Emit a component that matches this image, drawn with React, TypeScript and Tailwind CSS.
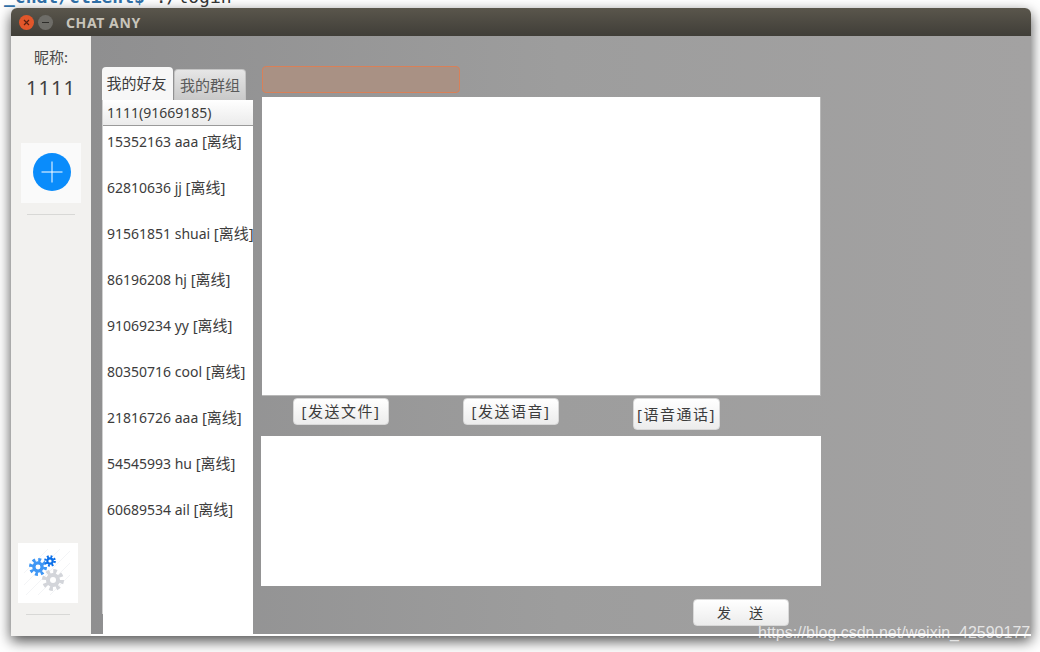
const friends = [
  ["15352163", "aaa"],
  ["62810636", "jj"],
  ["91561851", "shuai"],
  ["86196208", "hj"],
  ["91069234", "yy"],
  ["80350716", "cool"],
  ["21816726", "aaa"],
  ["54545993", "hu"],
  ["60689534", "ail"],
];

const font = "font-['Noto_Sans','Noto_Sans_CJK_SC',sans-serif]";

function Gear({ cx, cy, r, color, hole }: { cx: number; cy: number; r: number; color: string; hole: string }) {
  const teethR = r * 0.92;
  const circ = 2 * Math.PI * teethR;
  const dash = circ / 16;
  return (
    <g>
      <circle cx={cx} cy={cy} r={teethR} fill="none" stroke={color} strokeWidth={r * 0.5} strokeDasharray={`${dash} ${dash}`} />
      <circle cx={cx} cy={cy} r={r * 0.75} fill={color} />
      <circle cx={cx} cy={cy} r={r * 0.32} fill={hole} />
    </g>
  );
}

function ActionButton({ label, className }: { label: string; className: string }) {
  return (
    <div
      className={`flex items-center justify-center rounded-[4px] border border-[#d8d8d8] bg-gradient-to-b from-white to-[#ececec] text-[#3c3c3c] ${className}`}
    >
      {label}
    </div>
  );
}

export default function App() {
  return (
    <div className={`relative h-[652px] w-[1040px] overflow-hidden bg-white ${font}`}>
      <div className="h-[8px] overflow-hidden pl-[4px]">
        <div className="-mt-[13px] whitespace-pre font-['DejaVu_Sans_Mono',monospace] text-[18px] font-bold leading-[20px] text-[#2f6ea5]">
          _chat/client$<span className="font-normal text-[#333]"> ./login</span>
        </div>
      </div>

      <div className="ml-[11px] flex h-[628px] w-[1020px] flex-col overflow-hidden rounded-t-[6px] shadow-[0_5px_14px_rgba(0,0,0,0.7)]">
        <div className="flex h-[28px] shrink-0 items-center bg-gradient-to-b from-[#5a564c] to-[#403e38] pl-[8px]">
          <div className="flex h-[15px] w-[15px] items-center justify-center rounded-full bg-[#e2562a]">
            <svg width="7" height="7" viewBox="0 0 7 7">
              <path d="M1 1L6 6M6 1L1 6" stroke="#5a2010" strokeWidth="1.2" />
            </svg>
          </div>
          <div className="ml-[4px] flex h-[15px] w-[15px] items-center justify-center rounded-full bg-[#6e6d68]">
            <div className="h-px w-[7px] bg-[#2e2d2a]" />
          </div>
          <div className="ml-[13px] text-[14px] font-bold tracking-[0.6px] text-[#c8c4ba]">CHAT ANY</div>
        </div>

        <div className="flex h-[600px] border-b-2 border-white">
          <div className="-mb-[2px] flex w-[80px] shrink-0 flex-col items-center bg-[#f2f1ef]">
            <div className="mt-[11px] text-[15px] leading-[20px] text-[#4a4a4a]">昵称:</div>
            <div className="mt-[9px] text-[20px] leading-[24px] tracking-[1px] text-[#3f3f3f]">1111</div>
            <div className="mt-[43px] flex h-[60px] w-[60px] items-center justify-center bg-[#fafafa]">
              <svg width="38" height="38" viewBox="0 0 38 38" className="-mt-[2px] ml-[1px]">
                <circle cx="19" cy="19" r="19" fill="#0a8cfb" />
                <path d="M19 8.5V29.5M8.5 19H29.5" stroke="#fff" strokeWidth="1" />
              </svg>
            </div>
            <div className="mt-[11px] h-px w-[48px] bg-[#d8d8d6]" />
            <div className="flex-1" />
            <div className="-ml-[6px] flex h-[60px] w-[60px] items-center justify-center bg-white">
              <svg width="60" height="60" viewBox="0 0 60 60">
                <path d="M6 30L30 6M6 42L42 6M8 52L52 8M20 52L52 20M32 52L52 32" stroke="#f3f4f6" strokeWidth="1" fill="none" />
                <Gear cx={20} cy={24} r={7.7} color="#3f97f5" hole="#fff" />
                <Gear cx={32} cy={18} r={5} color="#0b6fe8" hole="#fff" />
                <Gear cx={35} cy={37} r={9.4} color="#d3d5da" hole="#fff" />
              </svg>
            </div>
            <div className="-ml-[6px] mb-[21px] mt-[11px] h-px w-[44px] bg-[#d8d8d6]" />
          </div>

          <div className="flex min-w-0 flex-1 bg-gradient-to-r from-[#8f8f90] via-[#9d9d9d] to-[#a3a2a2] pl-[11px]">
            <div className="mt-[31px] flex w-[151px] shrink-0 flex-col">
              <div className="flex h-[33px] shrink-0 items-end gap-px text-[15px]">
                <div className="flex h-[33px] w-[71px] items-center justify-center rounded-t-[4px] bg-[#f7f7f7] pr-[2px] text-[#3c3c3c]">
                  我的好友
                </div>
                <div className="flex h-[31px] w-[72px] items-center justify-center rounded-t-[4px] border border-b-0 border-[#c4c4c4] bg-gradient-to-b from-[#e6e6e6] to-[#c9c9c9] text-[#5a5a5a]">
                  我的群组
                </div>
              </div>
              <div className="flex min-h-0 flex-1">
                <div className="mb-[20px] w-px bg-[#d0d0d0]" />
                <div className="flex min-w-0 flex-1 flex-col bg-white">
                  <div className="flex h-[26px] shrink-0 items-center border-b border-[#9a9a9a] bg-gradient-to-b from-white to-[#ebebeb] pl-[4px] text-[14px] text-[#3c3c3c]">
                    1111(91669185)
                  </div>
                  {friends.map(([id, name]) => (
                    <div
                      key={id}
                      className="h-[46px] shrink-0 whitespace-nowrap pl-[4px] pt-[5px] text-[14px] leading-[20px] text-[#3c3c3c]"
                    >
                      {id} {name} <span className="text-[15px]">[离线]</span>
                    </div>
                  ))}
                </div>
              </div>
            </div>

            <div className="ml-[8px] flex w-[560px] shrink-0 flex-col">
              <div className="ml-[1px] mt-[30px] h-[27px] w-[198px] rounded-[4px] border border-[#d98058] bg-[#a99184]" />
              <div className="ml-[1px] mt-[4px] h-[299px] w-[559px] border-b border-r border-[#b8b8b8] bg-white" />
              <div className="mt-[2px] flex h-[38px] items-start text-[15px] tracking-[1.5px]">
                <ActionButton label="[发送文件]" className="ml-[32px] h-[27px] w-[96px]" />
                <ActionButton label="[发送语音]" className="ml-[74px] h-[27px] w-[96px]" />
                <ActionButton label="[语音通话]" className="ml-[74px] h-[32px] w-[87px]" />
              </div>
              <div className="h-[150px] w-[560px] bg-white" />
              <ActionButton label="发　送" className="ml-[432px] mt-[13px] h-[27px] w-[96px] text-[14px] tracking-[2px]" />
            </div>
          </div>
        </div>
      </div>

      <div className="absolute left-[758px] top-[623px] whitespace-nowrap font-['Liberation_Sans',sans-serif] text-[16px] leading-[20px] text-[#ffffffb8]">
        https://blog.csdn.net/weixin_42590177
      </div>
    </div>
  );
}
